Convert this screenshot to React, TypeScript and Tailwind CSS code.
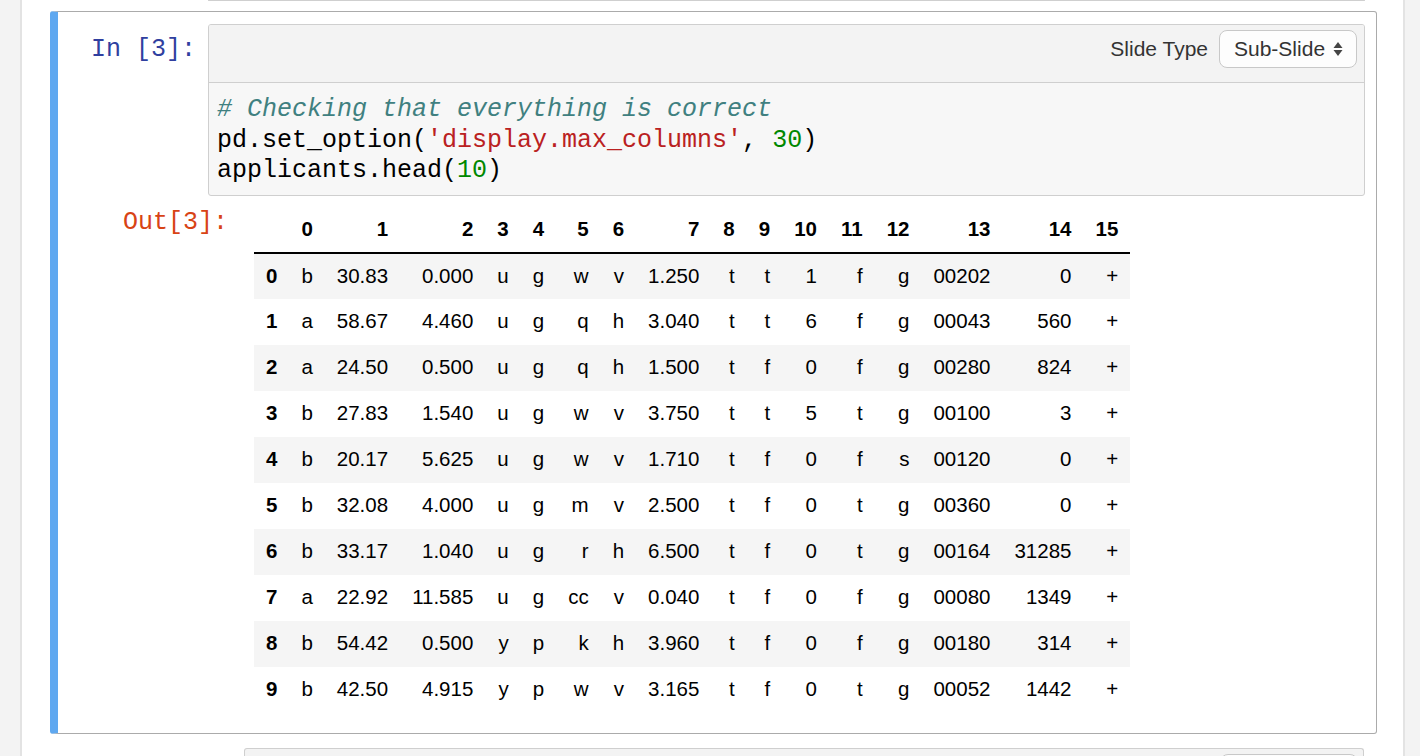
import { ReactNode } from "react";

const rows: string[][] = [
  ["b", "30.83", "0.000", "u", "g", "w", "v", "1.250", "t", "t", "1", "f", "g", "00202", "0", "+"],
  ["a", "58.67", "4.460", "u", "g", "q", "h", "3.040", "t", "t", "6", "f", "g", "00043", "560", "+"],
  ["a", "24.50", "0.500", "u", "g", "q", "h", "1.500", "t", "f", "0", "f", "g", "00280", "824", "+"],
  ["b", "27.83", "1.540", "u", "g", "w", "v", "3.750", "t", "t", "5", "t", "g", "00100", "3", "+"],
  ["b", "20.17", "5.625", "u", "g", "w", "v", "1.710", "t", "f", "0", "f", "s", "00120", "0", "+"],
  ["b", "32.08", "4.000", "u", "g", "m", "v", "2.500", "t", "f", "0", "t", "g", "00360", "0", "+"],
  ["b", "33.17", "1.040", "u", "g", "r", "h", "6.500", "t", "f", "0", "t", "g", "00164", "31285", "+"],
  ["a", "22.92", "11.585", "u", "g", "cc", "v", "0.040", "t", "f", "0", "f", "g", "00080", "1349", "+"],
  ["b", "54.42", "0.500", "y", "p", "k", "h", "3.960", "t", "f", "0", "f", "g", "00180", "314", "+"],
  ["b", "42.50", "4.915", "y", "p", "w", "v", "3.165", "t", "f", "0", "t", "g", "00052", "1442", "+"],
];

const mono = "font-['Liberation_Mono',monospace]";
const sans = "font-['Liberation_Sans',Arial,sans-serif]";

const Arrows = () => (
  <svg width="10" height="16" viewBox="0 0 10 16" className="ml-[8px]">
    <path d="M5 1 L9.5 7 L0.5 7 Z" fill="#444" />
    <path d="M5 15 L9.5 9 L0.5 9 Z" fill="#444" />
  </svg>
);

const Toolbar = () => (
  <div className={`flex items-start justify-end h-[58px] pt-[5px] pr-[7px] bg-[#f3f3f3] border-b border-[#cfcfcf] ${sans}`}>
    <span className="text-[21px] leading-[38px] text-[#333] mr-[11px]">Slide Type</span>
    <div className="flex items-center h-[38px] w-[138px] pl-[14px] rounded-[8px] border border-[#c8c8c8] bg-[#fdfdfd] text-[21px] text-[#333]">
      Sub-Slide
      <Arrows />
    </div>
  </div>
);

const Code = ({ children }: { children: ReactNode }) => (
  <div className={`pl-[8px] pt-[12px] pb-[8px] text-[25px] leading-[30.5px] text-black ${mono}`}>{children}</div>
);

export default function App() {
  return (
    <div className="w-[1420px] h-[756px] overflow-hidden bg-[#f3f3f3] flex">
      <div className="w-[20px] shrink-0" />
      <div className="w-[1385px] shrink-0 bg-white border-x-2 border-[#e3e3e3] flex flex-col">
        {/* tail of previous cell */}
        <div className="ml-[186px] mr-[38px] h-[2px] border-x border-b border-[#cfcfcf] rounded-b-[3px] bg-[#f7f7f7]" />

        {/* selected cell */}
        <div className="mt-[10px] ml-[28px] mr-[26px] border border-[#ababab] border-l-[8px] border-l-[#5fa8f0] rounded-[3px] pt-[12px] pb-[20px]">
          <div className="flex">
            <div className={`w-[150px] shrink-0 text-right pr-[12px] pt-[11px] text-[25px] leading-[30px] text-[#303f9f] ${mono}`}>
              In&nbsp;[3]:
            </div>
            <div className="flex-1 mr-[11px] border border-[#cfcfcf] rounded-[3px] bg-[#f7f7f7] overflow-hidden">
              <Toolbar />
              <Code>
                <div className="italic text-[#408080]"># Checking that everything is correct</div>
                <div>
                  pd.set_option(<span className="text-[#ba2121]">'display.max_columns'</span>, <span className="text-[#008800]">30</span>)
                </div>
                <div>
                  applicants.head(<span className="text-[#008800]">10</span>)
                </div>
              </Code>
            </div>
          </div>

          <div className="flex mt-[10px]">
            <div className={`w-[178px] shrink-0 text-right pr-[8px] pt-[2px] text-[25px] leading-[30px] text-[#d84315] ${mono}`}>
              Out[3]:
            </div>
            <div className="ml-[18px] pt-[1px]">
              <table className={`border-collapse text-[20.5px] text-black ${sans}`}>
                <thead>
                  <tr className="h-[46px] border-b-2 border-black">
                    <th className="px-[12px]" />
                    {rows[0].map((_, i) => (
                      <th key={i} className="px-[12px] text-right font-bold">
                        {i}
                      </th>
                    ))}
                  </tr>
                </thead>
                <tbody>
                  {rows.map((r, ri) => (
                    <tr key={ri} className={`h-[46px] ${ri % 2 === 0 ? "bg-[#f5f5f5]" : ""}`}>
                      <th className="px-[12px] text-right font-bold">{ri}</th>
                      {r.map((v, ci) => (
                        <td key={ci} className="px-[12px] text-right">
                          {v}
                        </td>
                      ))}
                    </tr>
                  ))}
                </tbody>
              </table>
            </div>
          </div>
        </div>

        {/* next cell */}
        <div className="mt-[14px] ml-[222px] mr-[39px] border-x border-t border-[#cfcfcf] rounded-t-[3px] bg-[#f3f3f3] pt-[5px] pr-[5px] flex justify-end">
          <div className="h-[38px] w-[138px] rounded-[8px] border border-[#c8c8c8] bg-[#fdfdfd]" />
        </div>
      </div>
    </div>
  );
}
